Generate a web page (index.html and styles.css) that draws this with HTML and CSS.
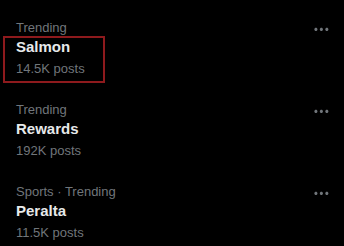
FILE: index.html
```html
<!DOCTYPE html>
<html lang="en">
<head>
  <meta charset="UTF-8" />
  <meta name="viewport" content="width=device-width, initial-scale=1.0"/>
  <title>Trends</title>
  <link rel="stylesheet" href="styles.css">
</head>
<body>

  <div class="trends">
    <!-- Trend 1 -->
    <div class="trend">
      <div class="trend-info">
        <div class="trend-meta">Trending</div>
        <div class="trend-name">Salmon</div>
        <div class="trend-count">14.5K posts</div>
      </div>
      <svg class="more" viewBox="0 0 24 24"><path d="M3 12c0-1.1.9-2 2-2s2 .9 2 2-.9 2-2 2-2-.9-2-2zm9 2c1.1 0 2-.9 2-2s-.9-2-2-2-2 .9-2 2 .9 2 2 2zm7 0c1.1 0 2-.9 2-2s-.9-2-2-2-2 .9-2 2 .9 2 2 2z"/></svg>
      <div class="highlight"></div>
    </div>

    <!-- Trend 2 -->
    <div class="trend">
      <div class="trend-info">
        <div class="trend-meta">Trending</div>
        <div class="trend-name">Rewards</div>
        <div class="trend-count">192K posts</div>
      </div>
      <svg class="more" viewBox="0 0 24 24"><path d="M3 12c0-1.1.9-2 2-2s2 .9 2 2-.9 2-2 2-2-.9-2-2zm9 2c1.1 0 2-.9 2-2s-.9-2-2-2-2 .9-2 2 .9 2 2 2zm7 0c1.1 0 2-.9 2-2s-.9-2-2-2-2 .9-2 2 .9 2 2 2z"/></svg>
    </div>

    <!-- Trend 3 -->
    <div class="trend">
      <div class="trend-info">
        <div class="trend-meta">Sports · Trending</div>
        <div class="trend-name">Peralta</div>
        <div class="trend-count">11.5K posts</div>
      </div>
      <svg class="more" viewBox="0 0 24 24"><path d="M3 12c0-1.1.9-2 2-2s2 .9 2 2-.9 2-2 2-2-.9-2-2zm9 2c1.1 0 2-.9 2-2s-.9-2-2-2-2 .9-2 2 .9 2 2 2zm7 0c1.1 0 2-.9 2-2s-.9-2-2-2-2 .9-2 2 .9 2 2 2z"/></svg>
    </div>
  </div>

</body>
</html>
```

FILE: styles.css
```css
body {
  margin: 0;
  padding: 0;
  background: #000;
  font-family: "Liberation Sans", Arial, sans-serif;
}

.trends {
  padding-top: 6px;
}

.trend {
  position: relative;
  display: flex;
  justify-content: space-between;
  height: 61px;
  padding: 12px 13px 9px 16px;
}

.trend-meta {
  font-size: 13px;
  line-height: 19px;
  color: #71767b;
}

.trend-name {
  font-size: 15px;
  font-weight: bold;
  line-height: 20px;
  color: #e7e9ea;
}

.trend-count {
  font-size: 13px;
  line-height: 20px;
  padding-top: 2px;
  color: #71767b;
}

.more {
  width: 18.75px;
  height: 18.75px;
  margin-top: 2px;
  fill: #71767b;
}

/* annotation box over the first trend */
.highlight {
  position: absolute;
  left: 3px;
  top: 30px;
  width: 98px;
  height: 43px;
  border: 2px solid #8e1a1d;
}
```
